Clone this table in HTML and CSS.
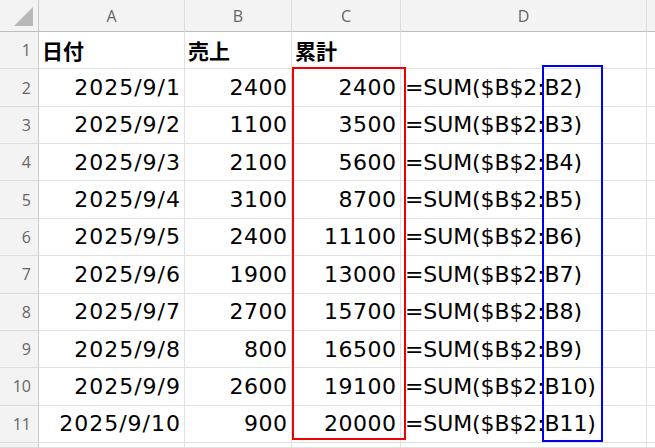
FILE: index.html
```html
<!DOCTYPE html>
<html lang="ja">
<head>
<meta charset="utf-8">
<link rel="stylesheet" href="styles.css">
</head>
<body>
<div class="sheet">
  <div class="grid">
    <div class="corner"><span class="tri"></span></div>
    <div class="colhdr">A</div>
    <div class="colhdr">B</div>
    <div class="colhdr">C</div>
    <div class="colhdr">D</div>
    <div class="colhdr last"></div>

    <div class="rowhdr">1</div>
    <div class="cell head">日付</div>
    <div class="cell head">売上</div>
    <div class="cell head">累計</div>
    <div class="cell"></div>
    <div class="cell last"></div>

    <div class="rowhdr">2</div><div class="cell date">2025/9/1</div><div class="cell num">2400</div><div class="cell num">2400</div><div class="cell fx">=SUM($B$2:B2)</div><div class="cell last"></div>
    <div class="rowhdr">3</div><div class="cell date">2025/9/2</div><div class="cell num">1100</div><div class="cell num">3500</div><div class="cell fx">=SUM($B$2:B3)</div><div class="cell last"></div>
    <div class="rowhdr">4</div><div class="cell date">2025/9/3</div><div class="cell num">2100</div><div class="cell num">5600</div><div class="cell fx">=SUM($B$2:B4)</div><div class="cell last"></div>
    <div class="rowhdr">5</div><div class="cell date">2025/9/4</div><div class="cell num">3100</div><div class="cell num">8700</div><div class="cell fx">=SUM($B$2:B5)</div><div class="cell last"></div>
    <div class="rowhdr">6</div><div class="cell date">2025/9/5</div><div class="cell num">2400</div><div class="cell num">11100</div><div class="cell fx">=SUM($B$2:B6)</div><div class="cell last"></div>
    <div class="rowhdr">7</div><div class="cell date">2025/9/6</div><div class="cell num">1900</div><div class="cell num">13000</div><div class="cell fx">=SUM($B$2:B7)</div><div class="cell last"></div>
    <div class="rowhdr">8</div><div class="cell date">2025/9/7</div><div class="cell num">2700</div><div class="cell num">15700</div><div class="cell fx">=SUM($B$2:B8)</div><div class="cell last"></div>
    <div class="rowhdr">9</div><div class="cell date">2025/9/8</div><div class="cell num">800</div><div class="cell num">16500</div><div class="cell fx">=SUM($B$2:B9)</div><div class="cell last"></div>
    <div class="rowhdr">10</div><div class="cell date">2025/9/9</div><div class="cell num">2600</div><div class="cell num">19100</div><div class="cell fx">=SUM($B$2:B10)</div><div class="cell last"></div>
    <div class="rowhdr">11</div><div class="cell date">2025/9/10</div><div class="cell num">900</div><div class="cell num">20000</div><div class="cell fx">=SUM($B$2:B11)</div><div class="cell last"></div>
    <div class="rowhdr"></div><div class="cell"></div><div class="cell"></div><div class="cell"></div><div class="cell"></div><div class="cell last"></div>
  </div>
  <div class="box red"></div>
  <div class="box blue"></div>
</div>
</body>
</html>
```
FILE: styles.css
```css
* { box-sizing: border-box; }
html, body { margin: 0; padding: 0; background: #fff; }
body { width: 655px; height: 448px; overflow: hidden; }

.sheet { position: relative; width: 655px; height: 448px; overflow: hidden; }

.grid {
  display: grid;
  grid-template-columns: 39px 146px 107px 109px 246px 8px;
  grid-template-rows: 32px repeat(11, 37.36px) 5px;
}

.corner {
  position: relative;
  background: #f3f3f3;
  border-right: 1px solid #c8c8c8;
  border-bottom: 1px solid #bdbdbd;
}
.tri {
  position: absolute;
  right: 5px;
  bottom: 5px;
  width: 0; height: 0;
  border-left: 19px solid transparent;
  border-bottom: 19px solid #b8b8b8;
}

.colhdr {
  background: #f3f3f3;
  border-right: 1px solid #dcdcdc;
  border-bottom: 1px solid #bdbdbd;
  color: #666;
  font-family: "Open Sans", "Liberation Sans", sans-serif;
  font-size: 16px;
  display: flex;
  align-items: center;
  justify-content: center;
  padding-top: 1px;
}

.rowhdr {
  background: #f3f3f3;
  border-right: 1px solid #c8c8c8;
  border-bottom: 1px solid #dcdcdc;
  color: #666;
  font-family: "Open Sans", "Liberation Sans", sans-serif;
  font-size: 16px;
  display: flex;
  align-items: center;
  justify-content: flex-end;
  padding-right: 7px;
}

.cell {
  border-right: 1px solid #e1e1e1;
  border-bottom: 1px solid #e1e1e1;
  color: #000;
  font-family: "DejaVu Sans", sans-serif;
  font-size: 22px;
  display: flex;
  align-items: center;
  white-space: nowrap;
  overflow: visible;
}
.cell.last, .colhdr.last { border-right: none; }

.head {
  font-family: "Noto Sans CJK JP", sans-serif;
  font-weight: 700;
  font-size: 21px;
  padding-left: 3px;
}
.num { justify-content: flex-end; padding-right: 3.5px; letter-spacing: 0.5px; }
.date { justify-content: flex-end; padding-right: 3px; letter-spacing: 1px; }
.fx { padding-left: 4px; letter-spacing: -0.1px; }

.box { position: absolute; }
.red {
  left: 292px; top: 67px; width: 114px; height: 373px;
  border: 2px solid #f00000;
}
.blue {
  left: 542px; top: 65px; width: 61px; height: 377px;
  border: 2px solid #0000f0;
}
```
